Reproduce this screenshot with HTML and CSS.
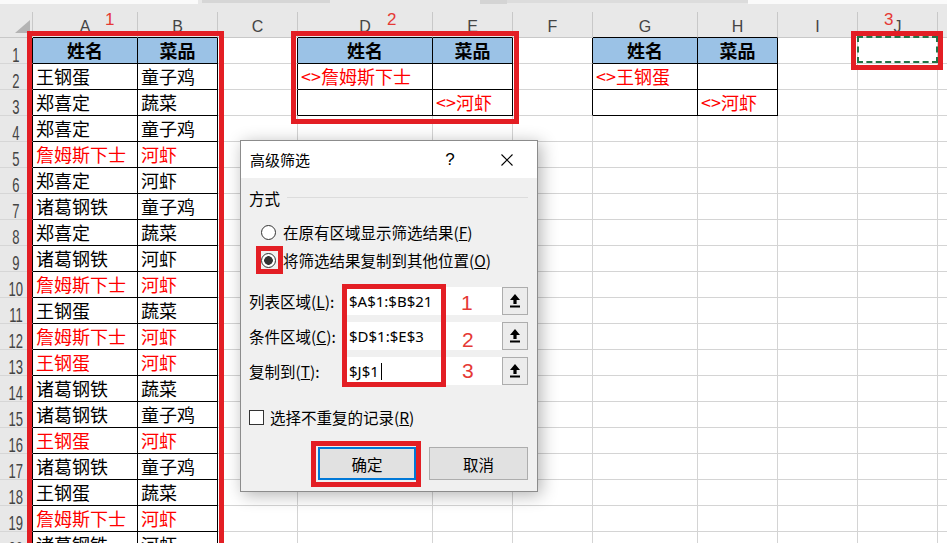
FILE: index.html
```html
<!DOCTYPE html>
<html lang="zh-CN">
<head>
<meta charset="utf-8">
<title>高级筛选</title>
<link rel="stylesheet" href="styles.css">
</head>
<body>
<div class="strip"><i class="s1"></i><i class="s2"></i><i class="s3"></i><i class="s4"></i><i class="s5"></i><i class="s6"></i><i class="s7"></i></div>
<div class="sheet">
<div class="c ch corner"><svg width="15" height="13" viewBox="0 0 15 13"><path d="M15 0V13H0Z" fill="#b4b4b4"/></svg></div>
<div class="c ch bb">A</div><div class="c ch bb">B</div><div class="c ch">C</div><div class="c ch bb">D</div><div class="c ch bb">E</div><div class="c ch">F</div><div class="c ch bb">G</div><div class="c ch bb">H</div><div class="c ch">I</div><div class="c ch">J</div><div class="c ch"></div>

<div class="c rh bl"><span>1</span></div><div class="c t h">姓名</div><div class="c t h">菜品</div><div class="c bl"></div><div class="c t h">姓名</div><div class="c t h">菜品</div><div class="c bl"></div><div class="c t h">姓名</div><div class="c t h">菜品</div><div class="c"></div><div class="c ants"></div><div class="c"></div>

<div class="c rh bl"><span>2</span></div><div class="c t">王钢蛋</div><div class="c t">童子鸡</div><div class="c bl"></div><div class="c t r">&lt;&gt;詹姆斯下士</div><div class="c t"></div><div class="c bl"></div><div class="c t r">&lt;&gt;王钢蛋</div><div class="c t"></div><div class="c"></div><div class="c"></div><div class="c"></div>

<div class="c rh bl"><span>3</span></div><div class="c t">郑喜定</div><div class="c t">蔬菜</div><div class="c bl"></div><div class="c t"></div><div class="c t r">&lt;&gt;河虾</div><div class="c bl"></div><div class="c t"></div><div class="c t r">&lt;&gt;河虾</div><div class="c"></div><div class="c"></div><div class="c"></div>

<div class="c rh bl"><span>4</span></div><div class="c t">郑喜定</div><div class="c t">童子鸡</div><div class="c"></div><div class="c"></div><div class="c"></div><div class="c"></div><div class="c"></div><div class="c"></div><div class="c"></div><div class="c"></div><div class="c"></div>

<div class="c rh bl"><span>5</span></div><div class="c t r">詹姆斯下士</div><div class="c t r">河虾</div><div class="c"></div><div class="c"></div><div class="c"></div><div class="c"></div><div class="c"></div><div class="c"></div><div class="c"></div><div class="c"></div><div class="c"></div>

<div class="c rh bl"><span>6</span></div><div class="c t">郑喜定</div><div class="c t">河虾</div><div class="c"></div><div class="c"></div><div class="c"></div><div class="c"></div><div class="c"></div><div class="c"></div><div class="c"></div><div class="c"></div><div class="c"></div>

<div class="c rh bl"><span>7</span></div><div class="c t">诸葛钢铁</div><div class="c t">童子鸡</div><div class="c"></div><div class="c"></div><div class="c"></div><div class="c"></div><div class="c"></div><div class="c"></div><div class="c"></div><div class="c"></div><div class="c"></div>

<div class="c rh bl"><span>8</span></div><div class="c t">郑喜定</div><div class="c t">蔬菜</div><div class="c"></div><div class="c"></div><div class="c"></div><div class="c"></div><div class="c"></div><div class="c"></div><div class="c"></div><div class="c"></div><div class="c"></div>

<div class="c rh bl"><span>9</span></div><div class="c t">诸葛钢铁</div><div class="c t">河虾</div><div class="c"></div><div class="c"></div><div class="c"></div><div class="c"></div><div class="c"></div><div class="c"></div><div class="c"></div><div class="c"></div><div class="c"></div>

<div class="c rh bl"><span>10</span></div><div class="c t r">詹姆斯下士</div><div class="c t r">河虾</div><div class="c"></div><div class="c"></div><div class="c"></div><div class="c"></div><div class="c"></div><div class="c"></div><div class="c"></div><div class="c"></div><div class="c"></div>

<div class="c rh bl"><span>11</span></div><div class="c t">王钢蛋</div><div class="c t">蔬菜</div><div class="c"></div><div class="c"></div><div class="c"></div><div class="c"></div><div class="c"></div><div class="c"></div><div class="c"></div><div class="c"></div><div class="c"></div>

<div class="c rh bl"><span>12</span></div><div class="c t r">詹姆斯下士</div><div class="c t r">河虾</div><div class="c"></div><div class="c"></div><div class="c"></div><div class="c"></div><div class="c"></div><div class="c"></div><div class="c"></div><div class="c"></div><div class="c"></div>

<div class="c rh bl"><span>13</span></div><div class="c t r">王钢蛋</div><div class="c t r">河虾</div><div class="c"></div><div class="c"></div><div class="c"></div><div class="c"></div><div class="c"></div><div class="c"></div><div class="c"></div><div class="c"></div><div class="c"></div>

<div class="c rh bl"><span>14</span></div><div class="c t">诸葛钢铁</div><div class="c t">蔬菜</div><div class="c"></div><div class="c"></div><div class="c"></div><div class="c"></div><div class="c"></div><div class="c"></div><div class="c"></div><div class="c"></div><div class="c"></div>

<div class="c rh bl"><span>15</span></div><div class="c t">诸葛钢铁</div><div class="c t">童子鸡</div><div class="c"></div><div class="c"></div><div class="c"></div><div class="c"></div><div class="c"></div><div class="c"></div><div class="c"></div><div class="c"></div><div class="c"></div>

<div class="c rh bl"><span>16</span></div><div class="c t r">王钢蛋</div><div class="c t r">河虾</div><div class="c"></div><div class="c"></div><div class="c"></div><div class="c"></div><div class="c"></div><div class="c"></div><div class="c"></div><div class="c"></div><div class="c"></div>

<div class="c rh bl"><span>17</span></div><div class="c t">诸葛钢铁</div><div class="c t">童子鸡</div><div class="c"></div><div class="c"></div><div class="c"></div><div class="c"></div><div class="c"></div><div class="c"></div><div class="c"></div><div class="c"></div><div class="c"></div>

<div class="c rh bl"><span>18</span></div><div class="c t">王钢蛋</div><div class="c t">蔬菜</div><div class="c"></div><div class="c"></div><div class="c"></div><div class="c"></div><div class="c"></div><div class="c"></div><div class="c"></div><div class="c"></div><div class="c"></div>

<div class="c rh bl"><span>19</span></div><div class="c t r">詹姆斯下士</div><div class="c t r">河虾</div><div class="c"></div><div class="c"></div><div class="c"></div><div class="c"></div><div class="c"></div><div class="c"></div><div class="c"></div><div class="c"></div><div class="c"></div>

<div class="c rh bl"><span>20</span></div><div class="c t">诸葛钢铁</div><div class="c t">河虾</div><div class="c"></div><div class="c"></div><div class="c"></div><div class="c"></div><div class="c"></div><div class="c"></div><div class="c"></div><div class="c"></div><div class="c"></div>
</div>

<div class="dlg">
  <div class="dlg-title">
    <span class="dlg-name">高级筛选</span>
    <span class="dlg-help">?</span>
    <span class="dlg-close"><svg width="12" height="12" viewBox="0 0 12 12"><path d="M0.5 0.5L11.5 11.5M11.5 0.5L0.5 11.5" stroke="#000" stroke-width="1.1" fill="none"/></svg></span>
  </div>
  <div class="dlg-body">
    <div class="grp"><span>方式</span><i class="grp-line"></i></div>
    <div class="opt"><span class="radio"></span><span>在原有区域显示筛选结果(<u>F</u>)</span></div>
    <div class="opt"><span class="radio on"></span><span>将筛选结果复制到其他位置(<u>O</u>)</span></div>
    <div class="fields">
      <div class="field"><label>列表区域(<u>L</u>):</label><div class="ref">$A$1:$B$21</div><div class="refbtn"><svg width="10" height="14" viewBox="0 0 10 14"><path d="M5 0L10 6H6.6V10H3.4V6H0Z" fill="#000"/><rect x="0" y="11.5" width="10" height="2" fill="#000"/></svg></div></div>
      <div class="field"><label>条件区域(<u>C</u>):</label><div class="ref">$D$1:$E$3</div><div class="refbtn"><svg width="10" height="14" viewBox="0 0 10 14"><path d="M5 0L10 6H6.6V10H3.4V6H0Z" fill="#000"/><rect x="0" y="11.5" width="10" height="2" fill="#000"/></svg></div></div>
      <div class="field"><label>复制到(<u>T</u>):</label><div class="ref">$J$1<span class="caret"></span></div><div class="refbtn"><svg width="10" height="14" viewBox="0 0 10 14"><path d="M5 0L10 6H6.6V10H3.4V6H0Z" fill="#000"/><rect x="0" y="11.5" width="10" height="2" fill="#000"/></svg></div></div>
    </div>
    <div class="chk-row"><span class="chk"></span><span>选择不重复的记录(<u>R</u>)</span></div>
    <div class="btns"><div class="btn ok">确定</div><div class="btn">取消</div></div>
  </div>
</div>

<div class="mark m1"></div>
<div class="mark m2"></div>
<div class="mark m3"></div>
<div class="mark m4"></div>
<div class="mark m5"></div>
<div class="mark m6"></div>

<div class="note n1">1</div>
<div class="note n2">2</div>
<div class="note n3">3</div>
<div class="note n4">1</div>
<div class="note n5">2</div>
<div class="note n6">3</div>
</body>
</html>
```

FILE: styles.css
```css
* { box-sizing: border-box; }
html, body { margin: 0; }
body {
  width: 947px;
  height: 543px;
  overflow: hidden;
  position: relative;
  background: #fff;
  color: #000;
  font-family: "Noto Sans CJK SC", "Noto Sans", sans-serif;
}

/* top cropped ribbon strip */
.strip { display: flex; height: 12px; background: #e8e8e8; }
.strip i { height: 4px; display: block; }
.s1 { width: 198px; background: #fafafa; }
.s2 { width: 4px; background: #e8e8e8; }
.s3 { width: 128px; background: #d6d6d6; height: 3px !important; }
.s4 { width: 150px; background: #e8e8e8; }
.s5 { width: 27px; background: #d4d4d4; }
.s6 { width: 241px; background: #dcdcdc; height: 3px !important; }
.s7 { flex: 1; background: #fafafa; }

/* sheet grid */
.sheet {
  display: grid;
  grid-template-columns: 33px 105px 80px 80px 135px 80px 80px 105px 80px 80px 80px 80px;
  grid-auto-rows: 26px;
}
.c {
  border-right: 1px solid #d4d4d4;
  border-bottom: 1px solid #d4d4d4;
  display: flex;
  align-items: center;
  padding-left: 3px;
  font-size: 18px;
  line-height: 25px;
  white-space: nowrap;
  overflow: hidden;
}
.ch {
  background: #e8e8e8;
  justify-content: center;
  padding: 5px 0 0;
  font: 16px "Liberation Sans", sans-serif;
  color: #444;
  border-right-color: #c8c8c8;
  border-bottom-color: #c8c8c8;
}
.corner { justify-content: flex-end; align-items: flex-end; padding: 0 2px 4px 0; }
.rh {
  background: #e8e8e8;
  justify-content: center;
  padding: 8px 0 0;
  color: #444;
  border-bottom-color: #d6d6d6;
  border-right-color: #c8c8c8;
}
.rh span {
  display: inline-block;
  font: 21px "Liberation Sans", sans-serif;
  transform: scaleX(.62);
}
.t { border-right-color: #000; border-bottom-color: #000; }
.bl { border-right-color: #000; }
.bb { border-bottom-color: #000; }
.h { background: #9bc2e6; font-weight: 700; justify-content: center; padding-left: 0; }
.r { color: #f00; }
.ants { position: relative; overflow: visible; }
.ants::after {
  content: "";
  position: absolute;
  left: -1px; top: -2px; right: -1px; bottom: 0;
  border: 2px dashed #217346;
}

/* dialog */
.dlg {
  position: absolute;
  left: 240px; top: 140px;
  width: 298px; height: 352px;
  border: 1px solid #8c8c8c;
  background: #f0f0f0;
  box-shadow: 3px 3px 16px rgba(0,0,0,.3);
  display: flex;
  flex-direction: column;
  font-size: 15.5px;
}
.dlg-title {
  height: 37px;
  background: #fff;
  display: flex;
  align-items: center;
  padding: 0 7px 0 9px;
  flex: none;
}
.dlg-name { flex: 1; font-size: 15px; }
.dlg-help { width: 46px; margin-right: 11px; text-align: center; font: 17px "Liberation Sans", sans-serif; }
.dlg-close { width: 46px; display: flex; justify-content: center; }
.dlg-body { padding: 10px 9px 0 8px; display: flex; flex-direction: column; }
.grp { height: 20px; display: flex; align-items: center; }
.grp-line { flex: 1; height: 1px; background: #dcdcdc; margin: -2px 0 0 7px; }
.opt { height: 28px; display: flex; align-items: center; padding-left: 12px; }
.grp + .opt { margin-top: 10px; }
.radio {
  width: 15px; height: 15px;
  border: 1px solid #333;
  border-radius: 50%;
  background: #fff;
  margin-right: 7px;
  flex: none;
}
.radio.on { background: radial-gradient(circle, #333 0 4px, #fff 4.6px); }
.fields { margin-top: 13px; display: flex; flex-direction: column; gap: 7px; }
.field { height: 28px; display: flex; align-items: center; }
.field label { width: 94px; }
.ref {
  width: 159px; height: 28px;
  background: #fff;
  display: flex; align-items: center;
  padding-left: 6px;
  font: 15px "Noto Sans", sans-serif;
}
.caret { display: inline-block; width: 1px; height: 17px; background: #000; margin-left: 2px; }
.refbtn {
  width: 26px; height: 28px;
  background: #ececec;
  border: 1px solid #adadad;
  display: flex; align-items: center; justify-content: center;
}
.chk-row { margin-top: 22px; height: 20px; display: flex; align-items: center; }
.chk { width: 15px; height: 15px; border: 1px solid #333; background: #fff; margin-right: 6px; flex: none; }
.btns { margin-top: 20px; display: flex; justify-content: flex-end; gap: 13px; }
.btn {
  width: 99px; height: 33px;
  background: #e1e1e1;
  border: 1px solid #adadad;
  display: flex; align-items: center; justify-content: center;
}
.btn.ok { width: 98px; border: 2px solid #0078d7; }

/* red annotation frames */
.mark { position: absolute; border: 5px solid #e31e24; }
.m1 { left: 27px; top: 31px; width: 197px; height: 600px; }
.m2 { left: 291px; top: 31px; width: 228px; height: 93px; }
.m3 { left: 851px; top: 31px; width: 92px; height: 39px; }
.m4 { left: 256px; top: 246px; width: 27px; height: 28px; }
.m5 { left: 342px; top: 284px; width: 104px; height: 103px; }
.m6 { left: 311px; top: 441px; width: 110px; height: 46px; }

/* annotation numbers */
.note { position: absolute; color: #e53935; font-family: "Liberation Sans", sans-serif; }
.n1, .n2, .n3 { font-size: 17px; line-height: 17px; top: 11px; }
.n1 { left: 105px; }
.n2 { left: 387px; }
.n3 { left: 884px; }
.n4, .n5, .n6 { font-size: 21px; line-height: 21px; }
.n4 { left: 461px; top: 292px; }
.n5 { left: 462px; top: 329px; }
.n6 { left: 462px; top: 360px; }
```
